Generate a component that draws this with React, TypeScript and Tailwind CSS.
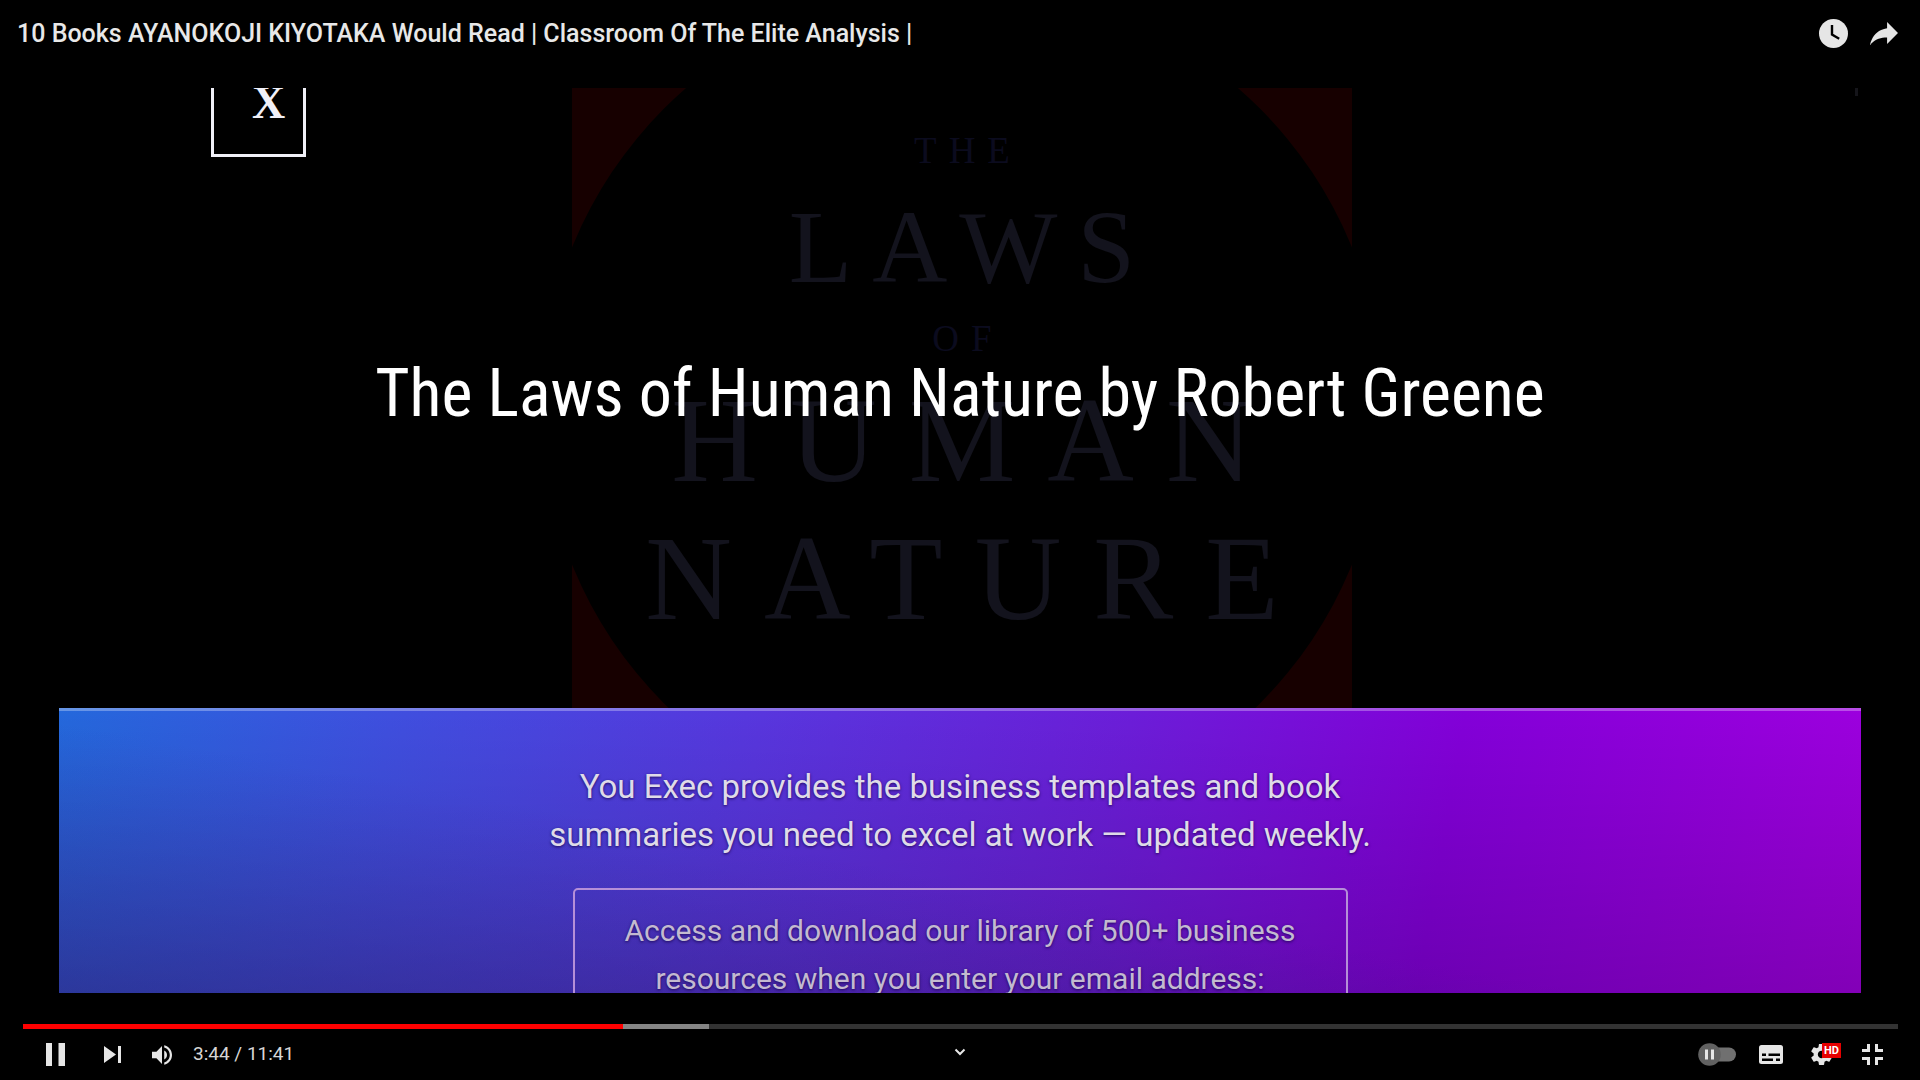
import React from "react";

const coverLine = "leading-none";

function IconButton({ label, children }: { label: string; children: React.ReactNode }) {
  return (
    <button type="button" aria-label={label} className="block shrink-0 text-[#e6e6e6]">
      {children}
    </button>
  );
}

function Header() {
  return (
    <header className="flex h-[66px] shrink-0 items-center justify-between pl-[17px] pr-[22px]">
      <h1 className="pt-px text-[25px] font-medium leading-8 text-[#e8e8e8]">
        <a href="#watch">10 Books AYANOKOJI KIYOTAKA Would Read | Classroom Of The Elite Analysis |</a>
      </h1>
      <div className="flex items-center gap-[22px]">
        <IconButton label="Watch later">
          <svg width="29" height="29" viewBox="0 0 29 29">
            <circle cx="14.5" cy="14.5" r="14.5" fill="currentColor" />
            <path d="M13 6v9.6l7.2 4.1" fill="none" stroke="#000" strokeWidth="2.4" />
          </svg>
        </IconButton>
        <IconButton label="Share">
          <svg width="28" height="23" viewBox="8 9.7 20 16.4" fill="currentColor">
            <path d="m 20.20,14.19 0,-4.45 7.79,7.79 -7.79,7.79 0,-4.56 C 16.27,20.69 12.10,21.81 9.34,24.76 8.80,25.13 7.60,27.29 8.12,25.65 9.08,21.32 11.80,17.18 15.98,15.38 c 1.33,-0.60 2.76,-0.98 4.21,-1.19 z" />
          </svg>
        </IconButton>
      </div>
    </header>
  );
}

function BookCover() {
  return (
    <div className="col-start-1 row-start-1 grid justify-center pl-1">
      <svg className="col-start-1 row-start-1" width="780" height="620" viewBox="0 0 780 620">
        <path
          fill="#170000"
          fillRule="evenodd"
          d="M0 0H780V620H0ZM390 -103a421 421 0 1 0 0 842a421 421 0 1 0 0-842Z"
        />
      </svg>
      <div className="col-start-1 row-start-1 flex flex-col items-center pt-11 font-['Liberation_Serif',serif] text-[#13131d]">
        <p className={`${coverLine} pl-3 text-[37px] tracking-[12px] text-[#0b0b1e]`}>THE</p>
        <p className={`${coverLine} mt-[26px] pl-5 text-[104px] tracking-[20px]`}>LAWS</p>
        <p className={`${coverLine} mt-[21px] pl-3 text-[37px] tracking-[12px] text-[#0b0b1e]`}>OF</p>
        <p className={`${coverLine} mt-6 pl-8 text-[120px] tracking-[32px]`}>HUMAN</p>
        <p className={`${coverLine} mt-[18px] pl-8 text-[120px] tracking-[32px]`}>NATURE</p>
      </div>
    </div>
  );
}

function Video() {
  return (
    <main className="mx-[59px] mt-[22px] flex grow flex-col overflow-hidden">
      <section className="grid h-[620px] shrink-0 grid-cols-1 overflow-hidden">
        <BookCover />
        <div className="col-start-1 row-start-1 flex items-start justify-between pl-[152px] pr-[3px]">
          <div className="flex h-[69px] w-[95px] justify-center border-3 border-t-0 border-[#f0f0f8] pl-5">
            <span className="-mt-2 font-['Liberation_Serif',serif] text-[46px] font-bold leading-[46px] text-[#f0f0f8]">X</span>
          </div>
          <div className="h-2 w-[3px] bg-[#15151a]" />
        </div>
        <h2 className="z-10 col-start-1 row-start-1 pt-[273px] text-center font-['Roboto_Condensed','Roboto',sans-serif] text-[66px] leading-none text-white">
          The Laws of Human Nature by Robert Greene
        </h2>
      </section>
      <section className="flex h-[285px] shrink-0 flex-col items-center overflow-hidden border-t-3 border-white/30 bg-[linear-gradient(to_bottom,transparent,rgba(0,0,0,0.18)),linear-gradient(10deg,rgba(66,36,160,0.5),transparent_45%),linear-gradient(100deg,#2468dc_0%,#3f4fdf_18%,#5836de_38%,#6c1dd9_58%,#8300d9_76%,#9f00df_100%)] bg-origin-border text-center">
        <p className="pt-[52px] text-[33px] leading-[48px] text-[#dfdbe8] [text-shadow:0_1px_3px_rgba(20,0,70,0.8)]">
          You Exec provides the business templates and book
          <br />
          summaries you need to excel at work — updated weekly.
        </p>
        <div className="mt-[29px] w-[775px] shrink-0 rounded-[5px] border-2 border-[#b58fd8] pb-16 pt-[17px]">
          <p className="text-[30px] leading-[48px] text-[#c3bad0] [text-shadow:0_1px_3px_rgba(20,0,70,0.8)]">
            Access and download our library of 500+ business
            <br />
            resources when you enter your email address:
          </p>
        </div>
      </section>
    </main>
  );
}

function Controls() {
  return (
    <footer className="mt-[31px] shrink-0">
      <div className="flex pl-[23px] pr-[22px]">
        <input
          type="range"
          aria-label="Seek"
          min={0}
          max={701}
          defaultValue={224}
          className="m-0 block h-[5px] w-full appearance-none bg-[linear-gradient(to_right,#ff0000_32%,#858585_32%,#858585_36.6%,#333333_36.6%)] [&::-webkit-slider-thumb]:h-[5px] [&::-webkit-slider-thumb]:w-px [&::-webkit-slider-thumb]:appearance-none"
        />
      </div>
      <div className="grid h-[51px] grid-cols-[1fr_auto_1fr] items-center pl-[46px] pr-[37px]">
        <div className="flex items-center">
          <IconButton label="Pause">
            <svg width="19" height="23" viewBox="0 0 19 23" fill="currentColor">
              <path d="M0 0h6v23H0zM12.500 0h6.500v23h-6.500z" />
            </svg>
          </IconButton>
          <div className="ml-[39px] flex">
            <IconButton label="Next">
              <svg width="17" height="17" viewBox="0 0 17 17" fill="currentColor">
                <path d="M0 0l12 8.500L0 17zM14 0h3v17h-3z" />
              </svg>
            </IconButton>
          </div>
          <div className="ml-[31px] flex">
            <IconButton label="Mute">
              <svg width="20" height="20" viewBox="8 9 18 18" fill="currentColor">
                <path d="M8,21 L12,21 L17,26 L17,10 L12,15 L8,15 Z M19,14 L19,22 C20.48,21.32 21.5,19.77 21.5,18 C21.5,16.26 20.48,14.74 19,14 Z M19,11.29 C21.89,12.15 24,14.83 24,18 C24,21.17 21.89,23.85 19,24.71 L19,26.77 C23.01,25.86 26,22.28 26,18 C26,13.72 23.01,10.14 19,9.23 Z" />
              </svg>
            </IconButton>
          </div>
          <p className="ml-[21px] pb-0.5 text-[19px] leading-6 text-[#d6d6d6]">3:44 / 11:41</p>
        </div>
        <div className="pb-1.5 pr-[9px]">
          <IconButton label="Show more">
            <svg width="12" height="8" viewBox="0 0 12 8">
              <path d="M1.500 1.500L6 6l4.500-4.500" fill="none" stroke="currentColor" strokeWidth="2" />
            </svg>
          </IconButton>
        </div>
        <div className="flex items-center justify-end">
          <button type="button" role="switch" aria-checked="false" aria-label="Autoplay" className="block">
            <svg width="38" height="23" viewBox="0 0 38 23">
              <rect x="12" y="4.500" width="26" height="14" rx="7" fill="#707070" />
              <circle cx="11.500" cy="11.500" r="11.300" fill="#616161" />
              <path d="M7 6.500h3v10H7zM13 6.500h3v10h-3z" fill="#e6e6e6" />
            </svg>
          </button>
          <div className="ml-[23px] flex">
            <IconButton label="Subtitles">
              <svg width="24" height="19" viewBox="0 0 24 19">
                <rect width="24" height="19" rx="2.500" fill="currentColor" />
                <path d="M3 8.500h4V11H3zM9.500 8.500H21V11H9.500zM3 13.500h11V16H3zM17 13.500h4V16h-4z" fill="#000" />
              </svg>
            </IconButton>
          </div>
          <button type="button" aria-label="Settings" className="relative ml-7 block w-[30px] text-[#e6e6e6]">
            <svg width="21" height="21" viewBox="10 10 16 16" fill="currentColor">
              <path d="m 23.94,18.78 c .03,-0.25 .05,-0.51 .05,-0.78 0,-0.27 -0.02,-0.52 -0.05,-0.78 l 1.68,-1.32 c .15,-0.12 .19,-0.33 .09,-0.51 l -1.6,-2.76 c -0.09,-0.17 -0.31,-0.24 -0.48,-0.17 l -1.99,.8 c -0.41,-0.32 -0.86,-0.58 -1.35,-0.78 l -0.30,-2.12 c -0.02,-0.19 -0.19,-0.33 -0.39,-0.33 l -3.2,0 c -0.2,0 -0.36,.14 -0.39,.33 l -0.30,2.12 c -0.48,.2 -0.93,.47 -1.35,.78 l -1.99,-0.8 c -0.18,-0.07 -0.39,0 -0.48,.17 l -1.6,2.76 c -0.10,.17 -0.05,.39 .09,.51 l 1.68,1.32 c -0.03,.25 -0.05,.52 -0.05,.78 0,.26 .02,.52 .05,.78 l -1.68,1.32 c -0.15,.12 -0.19,.33 -0.09,.51 l 1.6,2.76 c .09,.17 .31,.24 .48,.17 l 1.99,-0.8 c .41,.32 .86,.58 1.35,.78 l .30,2.12 c .02,.19 .19,.33 .39,.33 l 3.2,0 c .2,0 .36,-0.14 .39,-0.33 l .30,-2.12 c .48,-0.2 .93,-0.47 1.35,-0.78 l 1.99,.8 c .18,.07 .39,0 .48,-0.17 l 1.6,-2.76 c .09,-0.17 .05,-0.39 -0.09,-0.51 l -1.68,-1.32 0,0 z m -5.94,2.01 c -1.54,0 -2.8,-1.25 -2.8,-2.8 0,-1.54 1.25,-2.8 2.8,-2.8 1.54,0 2.8,1.25 2.8,2.8 0,1.54 -1.25,2.8 -2.8,2.8 l 0,0 z" />
            </svg>
            <span className="absolute -top-px right-0 h-[15px] w-[19px] bg-[#e60000] text-center text-[11px] font-bold leading-[15px] text-white">
              HD
            </span>
          </button>
          <div className="ml-[21px] flex">
            <IconButton label="Exit full screen">
              <svg width="21" height="21" viewBox="0 0 21 21" fill="currentColor">
                <path d="M5 0h3v8H0V5h5zM13 0h3v5h5v3h-8zM0 13h8v8H5v-5H0zM13 13h8v3h-5v5h-3z" />
              </svg>
            </IconButton>
          </div>
        </div>
      </div>
    </footer>
  );
}

export default function App() {
  return (
    <div className="flex min-h-screen flex-col bg-black font-['Roboto',sans-serif]">
      <Header />
      <Video />
      <Controls />
    </div>
  );
}
